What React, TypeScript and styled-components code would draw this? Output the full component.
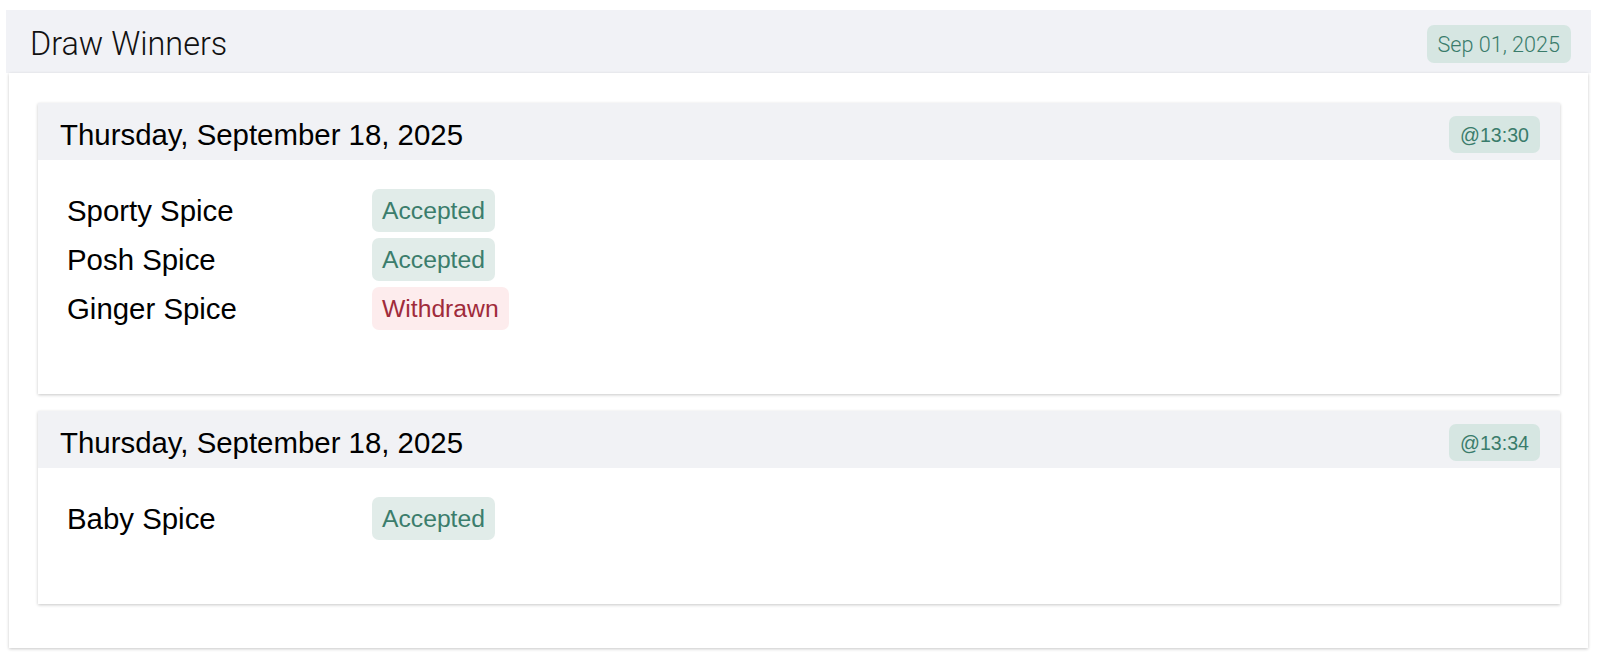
import React from "react";
import styled, { createGlobalStyle } from "styled-components";

const Global = createGlobalStyle`
  html, body { margin: 0; padding: 0; background: #ffffff; }
  body { font-family: "Liberation Sans", Arial, sans-serif; color: #000; }
  * { box-sizing: border-box; }
`;

const Page = styled.div`
  padding: 10px 15px 12px 6px;
`;

const Panel = styled.section`
  display: flex;
  flex-direction: column;
`;

const PanelHeader = styled.header`
  height: 63px;
  padding: 5px 20px 0 24px;
  background: #f1f2f6;
  display: flex;
  align-items: center;
  justify-content: space-between;
`;

const PanelTitle = styled.h1`
  margin: 0;
  font-family: Roboto, "Liberation Sans", sans-serif;
  font-weight: 300;
  font-size: 32.4px;
  line-height: normal;
  color: #111;
`;

const DateBadge = styled.span`
  font-family: Roboto, "Liberation Sans", sans-serif;
  font-weight: 300;
  font-size: 21.6px;
  line-height: 25px;
  padding: 6.5px 11px;
  border-radius: 7px;
  background: #d6e6e2;
  color: #3a7c6b;
`;

const PanelBody = styled.div`
  margin: 0 3px;
  padding: 30px 28px 44px 29px;
  background: #fff;
  box-shadow: 0 1px 3px rgba(0, 0, 0, 0.22);
  display: flex;
  flex-direction: column;
  gap: 17px;
`;

const DrawCard = styled.article`
  background: #fff;
  box-shadow: 0 1px 3px rgba(0, 0, 0, 0.22);
`;

const DrawHeader = styled.div`
  height: 57px;
  padding: 13px 20px 0 22px;
  background: #f1f2f5;
  display: flex;
  align-items: flex-start;
  justify-content: space-between;
`;

const DrawDate = styled.h2`
  margin: 0;
  font-weight: 400;
  font-size: 29.4px;
  line-height: 37px;
  color: #000;
`;

const TimeBadge = styled.span`
  font-size: 19.6px;
  line-height: 22px;
  padding: 7.5px 11px;
  border-radius: 7px;
  background: #d6e6e2;
  color: #3a7c6b;
`;

const DrawBody = styled.div`
  padding: 29px 30px 64px 29px;
  display: flex;
  flex-direction: column;
  gap: 6px;
`;

const WinnerRow = styled.div`
  display: grid;
  grid-template-columns: 305px auto;
  align-items: center;
  justify-items: start;
`;

const WinnerName = styled.span`
  font-size: 29.4px;
  line-height: 43px;
  color: #000;
`;

const StatusBadge = styled.span<{ $status: "Accepted" | "Withdrawn" }>`
  font-size: 24.7px;
  line-height: 27px;
  padding: 8px 10px;
  border-radius: 7px;
  background: ${(p) => (p.$status === "Accepted" ? "#e1ece9" : "#fdeced")};
  color: ${(p) => (p.$status === "Accepted" ? "#3b7d6c" : "#a02b3b")};
`;

type Winner = { name: string; status: "Accepted" | "Withdrawn" };
type Draw = { date: string; time: string; winners: Winner[] };

const draws: Draw[] = [
  {
    date: "Thursday, September 18, 2025",
    time: "@13:30",
    winners: [
      { name: "Sporty Spice", status: "Accepted" },
      { name: "Posh Spice", status: "Accepted" },
      { name: "Ginger Spice", status: "Withdrawn" },
    ],
  },
  {
    date: "Thursday, September 18, 2025",
    time: "@13:34",
    winners: [{ name: "Baby Spice", status: "Accepted" }],
  },
];

export default function App() {
  return (
    <>
      <Global />
      <Page>
        <Panel>
          <PanelHeader>
            <PanelTitle>Draw Winners</PanelTitle>
            <DateBadge>Sep 01, 2025</DateBadge>
          </PanelHeader>
          <PanelBody>
            {draws.map((d, i) => (
              <DrawCard key={i}>
                <DrawHeader>
                  <DrawDate>{d.date}</DrawDate>
                  <TimeBadge>{d.time}</TimeBadge>
                </DrawHeader>
                <DrawBody>
                  {d.winners.map((w) => (
                    <WinnerRow key={w.name}>
                      <WinnerName>{w.name}</WinnerName>
                      <StatusBadge $status={w.status}>{w.status}</StatusBadge>
                    </WinnerRow>
                  ))}
                </DrawBody>
              </DrawCard>
            ))}
          </PanelBody>
        </Panel>
      </Page>
    </>
  );
}
